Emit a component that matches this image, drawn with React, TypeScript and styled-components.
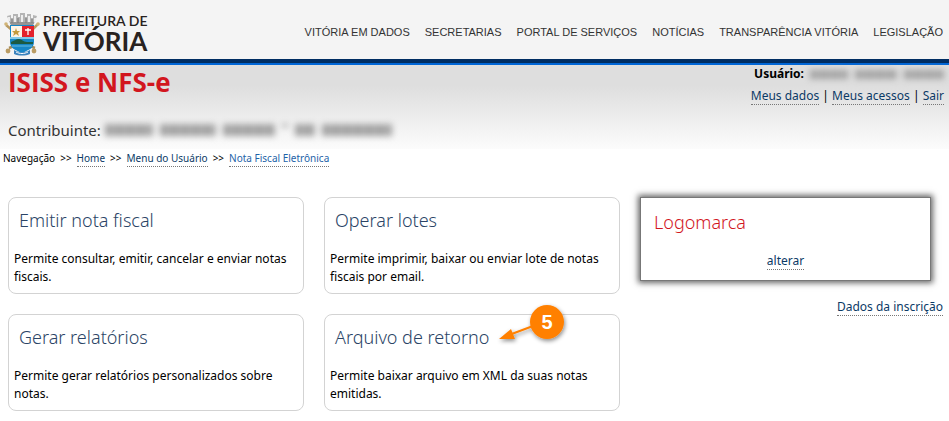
import React from 'react';
import styled, { createGlobalStyle } from 'styled-components';

const GlobalStyle = createGlobalStyle`
  *, *::before, *::after { box-sizing: border-box; }
  body {
    margin: 0;
    background: #fff;
    color: #000;
    font: 12px/18px "Noto Sans", "Open Sans", sans-serif;
  }
  h1, h2, p { margin: 0; }
`;

const Header = styled.header`
  display: flex;
  justify-content: space-between;
  align-items: center;
  min-height: 65px;
  padding: 0 6px 0 4px;
  background: #f4f4f4;
  border-bottom: 2px solid #0066d6;
  box-shadow: inset 0 -4px #002d62;
`;

const Brand = styled.a`
  display: flex;
  flex: none;
  text-decoration: none;
`;

const Nav = styled.nav`
  display: flex;
  flex-wrap: wrap;
  gap: 0 15px;
`;

const NavLink = styled.a`
  color: #333;
  font: 11px/16px "Liberation Sans", Arial, sans-serif;
  text-decoration: none;
`;

const Intro = styled.section`
  display: flex;
  justify-content: space-between;
  align-items: flex-start;
  min-height: 84px;
  padding: 0 5px 0 8px;
  background: linear-gradient(#dedede 25%, #fcfcfc);
`;

const Title = styled.h1`
  color: #d2161e;
  font: 700 26px/34px "Open Sans", sans-serif;
`;

const Taxpayer = styled.p`
  display: flex;
  align-items: center;
  gap: 4px;
  margin-top: 20px;
  color: #333;
  font-size: 15px;
  line-height: 22px;
`;

const Account = styled.div`
  text-align: right;
`;

const User = styled.p`
  display: flex;
  align-items: center;
  justify-content: flex-end;
  gap: 6px;
  font-weight: 700;
`;

const AccountLinks = styled.p`
  margin-top: 4px;
`;

const Redacted = styled.span`
  display: flex;
  gap: 7px;
  filter: blur(3px);
`;

const Word = styled.span<{ $w: number; $h: number }>`
  width: ${p => p.$w}px;
  height: ${p => p.$h}px;
  background: repeating-linear-gradient(90deg, #a0a0a0 0 6px, #acacac 6px 11px);
`;

const Link = styled.a<{ $tone?: string }>`
  display: inline-block;
  line-height: 16px;
  color: ${p => p.$tone ?? '#0b3a66'};
  text-decoration: none;
  border-bottom: 1px dotted #777;
`;

const Breadcrumb = styled.nav`
  display: flex;
  flex-wrap: wrap;
  align-items: baseline;
  gap: 0 5px;
  padding: 0 3px;
  font-size: 10px;
`;

const Main = styled.main`
  display: grid;
  grid-template-columns: 296fr 296fr 303fr;
  gap: 20px;
  padding: 30px 6px 10px 8px;
`;

const Cards = styled.div`
  grid-column: span 2;
  display: grid;
  grid-template-columns: 1fr 1fr;
  gap: 20px;
`;

const Card = styled.section`
  padding: 5px 5px 4px;
  border: 1px solid #d3d3d3;
  border-radius: 8px;
  min-height: 97px;
`;

const CardTitle = styled.h2<{ $red?: boolean }>`
  padding: 4px 5px;
  color: ${p => (p.$red ? '#d2161e' : '#2b4466')};
  font: 350 18px/26px "Noto Sans", "Open Sans", sans-serif;
`;

const CardHead = styled.div`
  position: relative;
  width: fit-content;
  margin-bottom: 13px;
`;

const Marker = styled.svg`
  position: absolute;
  left: 100%;
  bottom: 0;
`;

const Aside = styled.aside`
  text-align: right;
`;

const LogoBox = styled.section`
  margin: 0 12px 17px 0;
  padding: 7px 8px;
  min-height: 84px;
  border: 1px solid #777;
  box-shadow: 0 0 6px 2px #666;
  text-align: left;
`;

const Centered = styled.p`
  margin-top: 13px;
  text-align: center;
`;

const Logo = () => (
  <svg width="152" height="56" viewBox="0 0 152 56" role="img" aria-label="Prefeitura de Vitória">
    <path d="M5 44 26 36M31 44 9 36" stroke="#a98d58" strokeWidth="2.5" />
    <path d="M2 21 8 26M34 20 28 26" stroke="#b99b63" strokeWidth="2.5" />
    <circle cx="2" cy="20" r="1.8" fill="#d1b477" />
    <circle cx="34" cy="20" r="1.8" fill="#d1b477" />
    <circle cx="4" cy="47" r="2.4" fill="#b99b63" />
    <circle cx="30" cy="47" r="2.4" fill="#b99b63" />
    <path d="M3 12l4-1v3h2v-4h5v3h2v-4h5v4h2v-3h4v4h2v-3l4 1-4 10H7Z" fill="#b4b4b4" />
    <path d="M5 13v4M11 12v6M18 11v7M25 12v6M31 14v4" stroke="#ededed" strokeWidth="2" />
    <path d="M8 15v4M14 14v5M22 14v5M28 15v4" stroke="#777" strokeWidth="1" />
    <path d="M6 19h24M7 21h22" stroke="#777" strokeWidth="1" />
    <path d="M6 21h24v17c0 6-5 8-12 11C11 46 6 44 6 38Z" fill="#1787c7" />
    <path d="M7 22h11v11H7Z" fill="#fff4e6" />
    <path d="M18 22h12v11H18Z" fill="#e3222c" />
    <path d="m12 24 1 3h3l-2 2 1 3-3-2-3 2 1-3-2-2h3Z" fill="#c59b3d" />
    <path d="M24 24v7M21 26h6" stroke="#fff" strokeWidth="1.3" />
    <path d="M6 33h24v2H6Z" fill="#83c9e9" />
    <path d="M7 38c3-1 5-3 8-3s4 3 8 3h6v2H7Z" fill="#1c5a42" />
    <path d="M8 42h20" stroke="#67b9df" />
    <path d="M10 46c5 3 11 3 16 0v4c-5 2-11 2-16 0Z" fill="#3b83bd" />
    <path d="M12 48c4 2 8 2 12 0" stroke="#fff" fill="none" />
    <g fill="#282220" fontFamily="Lato, sans-serif">
      <text x="39" y="22" fontSize="14" fontWeight="600">PREFEITURA DE</text>
      <text x="39" y="47" fontSize="26" fontWeight="700">VITÓRIA</text>
    </g>
  </svg>
);

const menu = ['Vitória em dados', 'Secretarias', 'Portal de serviços', 'Notícias', 'Transparência Vitória', 'Legislação'];

const cards = [
  { title: 'Emitir nota fiscal', text: 'Permite consultar, emitir, cancelar e enviar notas fiscais.' },
  { title: 'Operar lotes', text: 'Permite imprimir, baixar ou enviar lote de notas fiscais por email.' },
  { title: 'Gerar relatórios', text: 'Permite gerar relatórios personalizados sobre notas.' },
  { title: 'Arquivo de retorno', text: 'Permite baixar arquivo em XML da suas notas emitidas.', step: 5 },
];

const StepMarker = ({ step }: { step: number }) => (
  <Marker width="78" height="54" viewBox="0 0 78 54">
    <defs>
      <filter id="shade" x="-30%" y="-30%" width="170%" height="180%">
        <feDropShadow dx="1" dy="2" stdDeviation="2" floodOpacity="0.45" />
      </filter>
    </defs>
    <g filter="url(#shade)" fill="#ff8000">
      <path d="M15 35 39 26" stroke="#ff8000" strokeWidth="2" />
      <path d="m5 39 12-10 4 10Z" />
      <circle cx="53" cy="22" r="17" />
    </g>
    <text x="53" y="29" fill="#fff" fontSize="20" fontWeight="700" textAnchor="middle" fontFamily="Liberation Sans, Arial, sans-serif">{step}</text>
  </Marker>
);

export default function App() {
  return (
    <>
      <GlobalStyle />
      <Header>
        <Brand href="#"><Logo /></Brand>
        <Nav>{menu.map(m => <NavLink key={m} href="#">{m.toUpperCase()}</NavLink>)}</Nav>
      </Header>
      <Intro>
        <div>
          <Title>ISISS e NFS-e</Title>
          <Taxpayer>
            Contribuinte:
            <Redacted>
              {[48, 56, 52, 6, 20, 70].map((w, i) => <Word key={i} $w={w} $h={w === 6 ? 3 : 12} />)}
            </Redacted>
          </Taxpayer>
        </div>
        <Account>
          <User>
            Usuário:
            <Redacted>{[38, 42, 40].map((w, i) => <Word key={i} $w={w} $h={9} />)}</Redacted>
          </User>
          <AccountLinks>
            <Link href="#">Meus dados</Link> | <Link href="#">Meus acessos</Link> | <Link href="#">Sair</Link>
          </AccountLinks>
        </Account>
      </Intro>
      <Breadcrumb aria-label="Navegação">
        <span>Navegação</span>
        <span>&gt;&gt;</span>
        <Link href="#">Home</Link>
        <span>&gt;&gt;</span>
        <Link href="#">Menu do Usuário</Link>
        <span>&gt;&gt;</span>
        <Link href="#" $tone="#1e63a8">Nota Fiscal Eletrônica</Link>
      </Breadcrumb>
      <Main>
        <Cards>
          {cards.map(c => (
            <Card key={c.title}>
              <CardHead>
                <CardTitle>{c.title}</CardTitle>
                {c.step && <StepMarker step={c.step} />}
              </CardHead>
              <p>{c.text}</p>
            </Card>
          ))}
        </Cards>
        <Aside>
          <LogoBox>
            <CardTitle $red>Logomarca</CardTitle>
            <Centered><Link href="#">alterar</Link></Centered>
          </LogoBox>
          <Link href="#">Dados da inscrição</Link>
        </Aside>
      </Main>
    </>
  );
}
